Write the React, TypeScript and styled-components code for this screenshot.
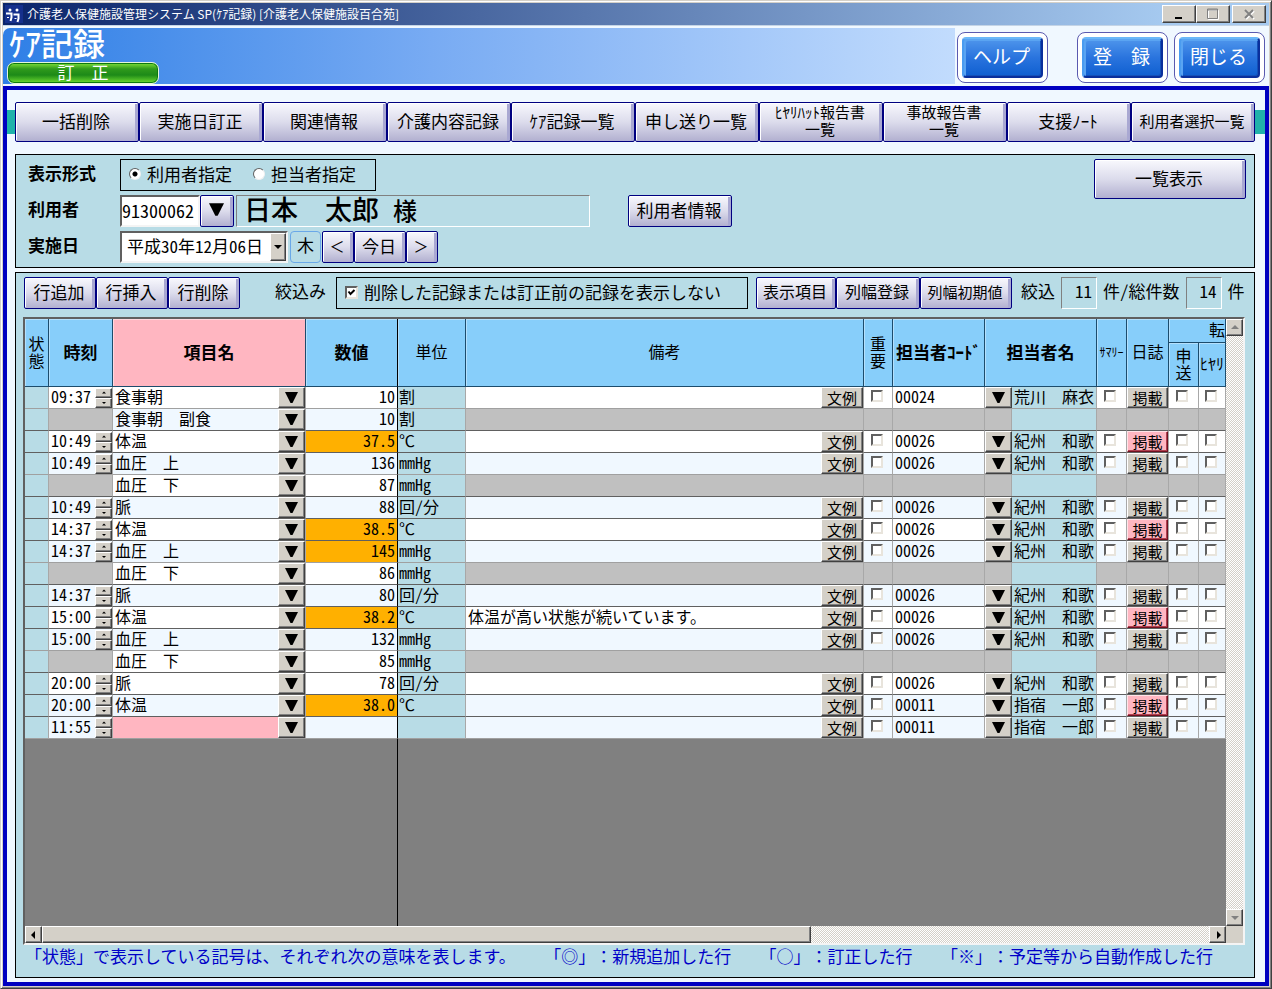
import React from "react";
import styled, { createGlobalStyle, css } from "styled-components";

const GlobalStyle = createGlobalStyle`
  *, *::before, *::after { box-sizing: border-box; }
  body {
    margin: 0;
    background: #d4d0c8;
    color: #000;
    font-family: "Noto Sans CJK JP", "Liberation Sans", sans-serif;
    font-size: 17px;
    line-height: 20px;
    white-space: nowrap;
    text-spacing-trim: space-all;
  }
  button, input, select {
    margin: 0;
    font: inherit;
    color: inherit;
    border-radius: 0;
  }
  input, select { min-width: 0; outline: none; }
  button { white-space: nowrap; cursor: pointer; }
`;

const halfWidth = css`
  font-feature-settings: "hwid";
`;

/* ---------- window frame ---------- */

const WindowFrame = styled.div`
  display: flex;
  flex-direction: column;
  min-height: 100vh;
  padding: 2px;
  border: 1px solid;
  border-color: #d4d0c8 #404040 #404040 #d4d0c8;
  background: #d4d0c8;
  box-shadow: inset 1px 1px #fff, inset -1px -1px #808080;
`;

const TitleBar = styled.div`
  display: flex;
  align-items: center;
  gap: 4px;
  height: 22px;
  padding: 0 3px 0 2px;
  background: linear-gradient(90deg, #0a246a, #a6caf0 92%);
  color: #fff;
  font-size: 12px;
`;

const TitleText = styled.span`
  flex: 1;
`;

const CaptionButtons = styled.div`
  display: flex;
`;

const raised = css`
  border: 1px solid;
  border-color: #fff #404040 #404040 #fff;
  background: #d4d0c8;
  box-shadow: inset -1px -1px #808080;
`;

const CaptionButton = styled.button<{ $apart?: boolean }>`
  ${raised}
  display: flex;
  align-items: center;
  justify-content: center;
  width: 34px;
  height: 18px;
  padding: 0;
  margin-left: ${(p) => (p.$apart ? 2 : 0)}px;
`;

/* ---------- header ---------- */

const Header = styled.header`
  display: flex;
  height: 61px;
  padding-top: 2px;
  border-top: 1px solid #c4d4e6;
  background: #f0f8ff;
`;

const Banner = styled.div`
  display: flex;
  flex-direction: column;
  align-items: flex-start;
  flex: 1;
  height: 56px;
  padding-left: 4px;
  border-top-left-radius: 7px;
  background: linear-gradient(90deg, #2f7fe6, #78abf3 45%, #c2dcfd);
`;

const ScreenTitle = styled.h1`
  margin: 0 0 5px;
  padding-left: 2px;
  color: #fff;
  font-size: 32px;
  font-weight: 500;
  line-height: 29px;
`;

const ModeBadge = styled.div`
  width: 152px;
  height: 22px;
  border: 1px solid #e6f6d8;
  border-radius: 7px;
  background: linear-gradient(#7fe03a, #2f9a1c 30%, #1d8a18 60%, #6fdc30);
  box-shadow: inset 0 0 0 1px #0c7a10;
  color: #fff;
  line-height: 17px;
  text-align: center;
`;

const HeaderActions = styled.div`
  display: flex;
  gap: 6px;
  padding: 4px 4px 0 2px;
`;

const GlossButton = styled.button<{ $spaced?: boolean }>`
  width: 91px;
  height: 51px;
  margin-right: ${(p) => (p.$spaced ? 23 : 0)}px;
  padding: 4px;
  border: 1px solid #5a5ab0;
  border-radius: 8px;
  background: #fff;
`;

const GlossFace = styled.span`
  display: block;
  height: 41px;
  padding-right: 2px;
  border: 2px solid;
  border-color: #6ab8f8 #0a2f9c #0a2f9c #4a9cf0;
  border-radius: 4px;
  background: linear-gradient(#4f96ec, #2a74de 50%, #0f5fd0);
  box-shadow: inset 2px 2px #5aa4f2, inset -1px -1px #1450b8;
  color: #fff;
  font-size: 19px;
  line-height: 33px;
`;

/* ---------- body ---------- */

const Workspace = styled.main`
  display: flex;
  flex-direction: column;
  flex: 1;
  padding: 12px 0 4px;
  border: 4px solid #0000c0;
  background: #f0f8ff;
`;

const FunctionBar = styled.nav`
  display: grid;
  grid-template-columns: repeat(10, 1fr);
  height: 40px;
  margin-bottom: 12px;
  padding: 0 10px 0 8px;
  background: linear-gradient(#20b2aa, #20b2aa) 0 8px / 100% 24px no-repeat;
`;

const PushButton = styled.button<{ $w?: number; $h?: number; $size?: number }>`
  display: flex;
  align-items: center;
  justify-content: center;
  flex: none;
  width: ${(p) => (p.$w ? `${p.$w}px` : "auto")};
  height: ${(p) => p.$h ?? 32}px;
  padding: 0 2px 4px 0;
  border: 1px solid #000080;
  border-radius: 2px;
  background: linear-gradient(#f8f8fd, #dcdcec 50%, #b2b0d0);
  box-shadow: inset 1px 1px #fff, inset -3px 0 #a9a8d2;
  font-size: ${(p) => p.$size ?? 17}px;
  line-height: 17px;
`;

const Panel = styled.section`
  margin: 0 10px 0 8px;
  border: 1px solid #000;
  background: #b8dce6;
`;

const ConditionPanel = styled(Panel)`
  display: flex;
  align-items: flex-start;
  justify-content: space-between;
  margin-bottom: 4px;
  padding: 4px 8px 4px 12px;
`;

const ConditionRows = styled.div`
  display: flex;
  flex-direction: column;
  gap: 4px;
`;

const Row = styled.div`
  display: flex;
  align-items: center;
  height: 32px;
`;

const RowLabel = styled.label`
  width: 92px;
  padding-bottom: 4px;
  font-weight: 700;
`;

const ChoiceBox = styled.div<{ $w: number }>`
  display: flex;
  align-items: center;
  gap: 21px;
  width: ${(p) => p.$w}px;
  height: 32px;
  padding: 0 8px 2px;
  border: 1px solid #000;
`;

const Choice = styled.label`
  display: flex;
  align-items: center;
  gap: 6px;
`;

const Radio = styled.input`
  appearance: none;
  width: 12px;
  height: 12px;
  border: 1px solid;
  border-color: #606060 #f0f0f0 #f0f0f0 #606060;
  border-radius: 6px;
  background: #fff;
  &:checked {
    background: radial-gradient(#000 2px, #fff 3px);
  }
`;

const Check = styled.input`
  appearance: none;
  flex: none;
  width: 13px;
  height: 13px;
  border: 2px solid;
  border-color: #606060 #e8e4dc #e8e4dc #606060;
  background: #fff;
`;

const CheckSlot = styled.span`
  display: grid;
  > * { grid-area: 1 / 1; }
  > svg { pointer-events: none; }
`;

const sunken = css`
  border: 2px solid;
  border-color: #606060 #f4f4f4 #f4f4f4 #606060;
  background: #fff;
`;

const CodeInput = styled.input`
  ${sunken}
  ${halfWidth}
  width: 80px;
  height: 32px;
  padding: 0 0 2px;
  font-size: 18px;
`;

const NameField = styled.output`
  display: flex;
  align-items: center;
  gap: 14px;
  width: 354px;
  height: 32px;
  margin: 0 38px 0 2px;
  padding: 0 0 4px 7px;
  border: 1px solid;
  border-color: #808080 #fff #fff #808080;
  font-size: 27px;
  font-weight: 500;
`;

const Honorific = styled.span`
  padding-top: 2px;
  font-size: 24px;
`;

const DateCombo = styled.div`
  ${sunken}
  display: flex;
  width: 168px;
  height: 32px;
`;

const DateSelect = styled.select`
  ${halfWidth}
  appearance: none;
  flex: 1;
  padding: 0 0 2px 5px;
  border: 0;
  background: #fff;
`;

const ComboArrow = styled.span`
  ${raised}
  display: flex;
  align-items: center;
  justify-content: center;
  width: 16px;
`;

const Weekday = styled.span`
  width: 31px;
  height: 32px;
  margin: 0 1px 0 2px;
  border: 1px solid #6aa8e8;
  border-radius: 4px;
  line-height: 26px;
  text-align: center;
`;

/* ---------- record panel ---------- */

const RecordPanel = styled(Panel)`
  display: flex;
  flex-direction: column;
  flex: 1;
  padding: 4px 9px 0 7px;
`;

const Tools = styled.div`
  display: flex;
  align-items: center;
  margin: 0 0 8px 1px;
`;

const ToolText = styled.span`
  padding-bottom: 4px;
`;

const ButtonGroup = styled.div`
  display: flex;
`;

const FilterGroup = styled.div`
  display: flex;
  align-items: center;
  gap: 10px;
  margin: 0 8px 0 35px;
`;

const Counts = styled.div`
  ${halfWidth}
  display: flex;
  align-items: center;
  gap: 6px;
  margin-left: 9px;
`;

const CountField = styled.output`
  width: 36px;
  height: 32px;
  padding-right: 4px;
  border: 1px solid;
  border-color: #808080 #fff #fff #808080;
  line-height: 26px;
  text-align: right;
`;

const GridFrame = styled.div`
  display: grid;
  grid-template-columns: minmax(0, 1fr) 17px;
  grid-template-rows: 1fr 17px;
  flex: 1;
  border: 2px solid;
  border-color: #606060 #f4f4f4 #f4f4f4 #606060;
  background: #d4d0c8;
`;

const GridView = styled.div`
  display: flex;
  flex-direction: column;
  overflow: hidden;
  background: #808080;
`;

const FrozenEdge = styled.div`
  flex: 1;
  width: 373px;
  border-right: 1px solid #000;
`;

const Table = styled.table`
  width: 100%;
  table-layout: fixed;
  border-collapse: separate;
  border-spacing: 0;
  font-size: 16px;
  line-height: 17px;
`;

const Head = styled.th<{ $pink?: boolean; $bold?: boolean; $frozen?: boolean; $small?: boolean; $end?: boolean }>`
  height: ${(p) => (p.$end ? 24 : 44)}px;
  padding: 0 0 2px;
  border-right: 1px solid ${(p) => (p.$frozen ? "#000" : "#1c4c6c")};
  border-bottom: 1px solid #1c4c6c;
  background: ${(p) => (p.$pink ? "#ffb6c1" : "#87cefa")};
  box-shadow: inset 1px 1px ${(p) => (p.$pink ? "#ffd8de" : "#b4e0fc")};
  font-size: ${(p) => (p.$small ? 12 : p.$bold ? 17 : 16)}px;
  font-weight: ${(p) => (p.$bold ? 700 : 400)};
  text-align: ${(p) => (p.$end ? "right" : "center")};
`;

type Tone = "plain" | "info" | "off" | "alert" | "need";
const tones: Record<Tone, string> = {
  plain: "transparent",
  info: "#b8dce6",
  off: "#c0c0c0",
  alert: "#ffb000",
  need: "#ffb6c1",
};

const RecordLine = styled.tr<{ $tint: boolean; $joined: boolean }>`
  background: ${(p) => (p.$tint ? "#f0f8ff" : "#fff")};
  > td {
    border-bottom: 1px solid ${(p) => (p.$joined ? "#a0a0a0" : "#606060")};
  }
`;

const Cell = styled.td<{ $tone?: Tone; $frozen?: boolean }>`
  height: 22px;
  padding: 0;
  border-right: 1px solid ${(p) => (p.$frozen ? "#000" : "#a8a8a8")};
  background: ${(p) => tones[p.$tone ?? "plain"]};
`;

const CellRow = styled.div`
  display: flex;
  align-items: center;
  height: 21px;
`;

const CellInput = styled.input<{ $right?: boolean; $tone?: Tone; $text?: boolean }>`
  flex: 1;
  width: 100%;
  height: 21px;
  padding: 0 2px 4px;
  border: 0;
  background: ${(p) => tones[p.$tone ?? "plain"]};
  font-feature-settings: ${(p) => (p.$text ? "normal" : '"hwid"')};
  text-align: ${(p) => (p.$right ? "right" : "left")};
`;

const UnitText = styled.span`
  ${halfWidth}
  display: block;
  padding: 0 0 3px 1px;
`;

const PersonName = styled.span`
  flex: 1;
  height: 21px;
  padding-left: 2px;
  background: #b8dce6;
  line-height: 18px;
`;

const CellButton = styled.button<{ $w: number; $pink?: boolean }>`
  ${raised}
  display: flex;
  align-items: center;
  justify-content: center;
  flex: none;
  width: ${(p) => p.$w}px;
  height: 21px;
  padding: 0;
  font-size: 15px;
  line-height: 15px;
  ${(p) =>
    p.$pink &&
    css`
      background: #ffb6c1;
      border-color: #ffe4e8 #701020 #701020 #ffe4e8;
      box-shadow: inset -1px -1px #b04050;
    `}
`;

const BlankSlot = styled.span<{ $w: number }>`
  flex: none;
  width: ${(p) => p.$w}px;
  height: 21px;
  border-right: 1px solid #a8a8a8;
`;

const Spinner = styled.div`
  display: flex;
  flex-direction: column;
  width: 17px;
`;

const SpinButton = styled.button`
  ${raised}
  display: flex;
  align-items: center;
  justify-content: center;
  height: 10px;
  padding: 0;
`;

const CheckCell = styled.div`
  display: flex;
  justify-content: center;
  height: 21px;
  padding: 3px 2px 0 0;
  > input { width: 12px; height: 12px; }
`;

const track = css`
  background: repeating-conic-gradient(#fff 0 25%, #d4d0c8 0 50%) 0 0 / 2px 2px;
`;

const VerticalBar = styled.div`
  ${track}
  display: flex;
  flex-direction: column;
  justify-content: space-between;
`;

const HorizontalBar = styled.div`
  ${track}
  display: flex;
  justify-content: space-between;
`;

const Thumb = styled.div`
  ${raised}
  flex: 0 0 64%;
  margin-right: auto;
`;

const ArrowButton = styled.button`
  ${raised}
  display: flex;
  align-items: center;
  justify-content: center;
  width: 17px;
  height: 17px;
  padding: 0;
`;

const Legend = styled.footer`
  display: flex;
  justify-content: space-between;
  height: 32px;
  padding: 1px 32px 0 2px;
  color: #0000c8;
`;

/* ---------- icons ---------- */

const Triangle = ({ w = 13, h = 11 }: { w?: number; h?: number }) => (
  <svg width={w} height={h} viewBox="0 0 13 11" aria-hidden="true">
    <path d="M0 0H13L7.5 11H5.5Z" fill="#000" />
  </svg>
);

const arrowPaths = {
  up: "M0 5L4 1L8 5Z",
  down: "M0 2L4 6L8 2Z",
  left: "M5 0L1 4L5 8Z",
  right: "M3 0L7 4L3 8Z",
};

const Arrow = ({ dir, size = 8, color = "#000" }: { dir: keyof typeof arrowPaths; size?: number; color?: string }) => (
  <svg width={size} height={size} viewBox="0 0 8 8" aria-hidden="true">
    <path d={arrowPaths[dir]} fill={color} />
  </svg>
);

const AppLogo = () => (
  <svg width="18" height="20" viewBox="0 0 18 20" aria-hidden="true">
    <rect y="1" width="18" height="18" fill="#15308c" />
    <circle cx="5" cy="6" r="1.5" fill="#fff" />
    <circle cx="12" cy="6" r="1.5" fill="#fff" />
    <path d="M1 9.500H6.500V13.500L5.500 17M8.500 10.500H13.500V14.500L12.500 18M3 13V14M10.500 14V15" stroke="#fff" strokeWidth="2" fill="none" />
  </svg>
);

/* ---------- data ---------- */

type Entry = {
  time?: string;
  item: string;
  value: string;
  unit: string;
  high?: boolean;
  note?: string;
  code?: string;
  person?: string;
  posted?: boolean;
  tint: boolean;
};

const wakayama = { code: "00026", person: "紀州　和歌" };
const ibusuki = { code: "00011", person: "指宿　一郎" };

const entries: Entry[] = [
  { time: "09:37", item: "食事朝", value: "10", unit: "割", code: "00024", person: "荒川　麻衣", tint: false },
  { item: "食事朝　副食", value: "10", unit: "割", tint: true },
  { time: "10:49", item: "体温", value: "37.5", unit: "℃", high: true, ...wakayama, posted: true, tint: false },
  { time: "10:49", item: "血圧　上", value: "136", unit: "mmHg", ...wakayama, tint: true },
  { item: "血圧　下", value: "87", unit: "mmHg", tint: false },
  { time: "10:49", item: "脈", value: "88", unit: "回/分", ...wakayama, tint: true },
  { time: "14:37", item: "体温", value: "38.5", unit: "℃", high: true, ...wakayama, posted: true, tint: false },
  { time: "14:37", item: "血圧　上", value: "145", unit: "mmHg", high: true, ...wakayama, tint: true },
  { item: "血圧　下", value: "86", unit: "mmHg", tint: false },
  { time: "14:37", item: "脈", value: "80", unit: "回/分", ...wakayama, tint: true },
  { time: "15:00", item: "体温", value: "38.2", unit: "℃", high: true, note: "体温が高い状態が続いています。", ...wakayama, posted: true, tint: false },
  { time: "15:00", item: "血圧　上", value: "132", unit: "mmHg", ...wakayama, tint: true },
  { item: "血圧　下", value: "85", unit: "mmHg", tint: false },
  { time: "20:00", item: "脈", value: "78", unit: "回/分", ...wakayama, tint: false },
  { time: "20:00", item: "体温", value: "38.0", unit: "℃", high: true, ...ibusuki, posted: true, tint: true },
  { time: "11:55", item: "", value: "", unit: "", ...ibusuki, tint: true },
];

const functions: { label: React.ReactNode; size?: number }[] = [
  { label: "一括削除" },
  { label: "実施日訂正" },
  { label: "関連情報" },
  { label: "介護内容記録" },
  { label: "ｹｱ記録一覧" },
  { label: "申し送り一覧" },
  { label: <>ﾋﾔﾘﾊｯﾄ報告書<br />一覧</>, size: 15 },
  { label: <>事故報告書<br />一覧</>, size: 15 },
  { label: "支援ﾉｰﾄ" },
  { label: "利用者選択一覧", size: 15 },
];

const columnWidths = [24, 64, 193, 92, 68, 0, 29, 92, 112, 30, 42, 30, 27];

/* ---------- rows ---------- */

function RecordRow({ entry, joined }: { entry: Entry; joined: boolean }) {
  const main = entry.time !== undefined;
  const rest: Tone = main ? "plain" : "off";
  return (
    <RecordLine $tint={entry.tint} $joined={joined}>
      <Cell $tone="info" />
      <Cell $tone={rest}>
        {main && (
          <CellRow>
            <CellInput aria-label="時刻" defaultValue={entry.time} />
            <Spinner>
              <SpinButton aria-label="時刻を進める"><Arrow dir="up" size={4} /></SpinButton>
              <SpinButton aria-label="時刻を戻す"><Arrow dir="down" size={4} /></SpinButton>
            </Spinner>
          </CellRow>
        )}
      </Cell>
      <Cell>
        <CellRow>
          <CellInput aria-label="項目名" $text defaultValue={entry.item} $tone={entry.item ? "plain" : "need"} />
          <CellButton $w={27} aria-label="項目を選択"><Triangle /></CellButton>
        </CellRow>
      </Cell>
      <Cell $frozen $tone={entry.high ? "alert" : "plain"}>
        <CellRow><CellInput aria-label="数値" $right defaultValue={entry.value} /></CellRow>
      </Cell>
      <Cell $tone="info"><UnitText>{entry.unit}</UnitText></Cell>
      <Cell $tone={rest}>
        {main && (
          <CellRow>
            <CellInput aria-label="備考" $text defaultValue={entry.note} />
            <CellButton $w={42}>文例</CellButton>
          </CellRow>
        )}
      </Cell>
      <Cell $tone={rest}>{main && <CheckCell><Check type="checkbox" aria-label="重要" /></CheckCell>}</Cell>
      <Cell $tone={rest}>
        {main && <CellRow><CellInput aria-label="担当者コード" defaultValue={entry.code} /></CellRow>}
      </Cell>
      <Cell $tone={rest}>
        <CellRow>
          {main ? <CellButton $w={27} aria-label="担当者を選択"><Triangle /></CellButton> : <BlankSlot $w={27} />}
          <PersonName>{entry.person}</PersonName>
        </CellRow>
      </Cell>
      <Cell $tone={rest}>{main && <CheckCell><Check type="checkbox" aria-label="サマリー" /></CheckCell>}</Cell>
      <Cell $tone={rest}>{main && <CellButton $w={41} $pink={entry.posted}>掲載</CellButton>}</Cell>
      <Cell $tone={rest}>{main && <CheckCell><Check type="checkbox" aria-label="申送" /></CheckCell>}</Cell>
      <Cell $tone={rest}>{main && <CheckCell><Check type="checkbox" aria-label="ヒヤリ" /></CheckCell>}</Cell>
    </RecordLine>
  );
}

export default function App() {
  return (
    <>
      <GlobalStyle />
      <WindowFrame>
        <TitleBar>
          <AppLogo />
          <TitleText>介護老人保健施設管理システム SP(ｹｱ記録) [介護老人保健施設百合苑]</TitleText>
          <CaptionButtons>
            <CaptionButton aria-label="最小化">
              <svg width="12" height="12" viewBox="0 0 12 12"><path d="M2 9H9V11H2Z" /></svg>
            </CaptionButton>
            <CaptionButton aria-label="最大化">
              <svg width="12" height="12" viewBox="0 0 12 12">
                <path d="M1.500 2.500H11.500V11.500H1.500Z" stroke="#fff" fill="none" />
                <path d="M.5 1H10.500V10.500H.5ZM.5 2H10.500" stroke="#808080" fill="none" />
              </svg>
            </CaptionButton>
            <CaptionButton $apart aria-label="閉じる">
              <svg width="12" height="12" viewBox="0 0 12 12">
                <path d="M3 3L11 11M11 3L3 11" stroke="#fff" strokeWidth="2" />
                <path d="M2 2L10 10M10 2L2 10" stroke="#808080" strokeWidth="2" />
              </svg>
            </CaptionButton>
          </CaptionButtons>
        </TitleBar>

        <Header>
          <Banner>
            <ScreenTitle>ｹｱ記録</ScreenTitle>
            <ModeBadge>訂　正</ModeBadge>
          </Banner>
          <HeaderActions>
            <GlossButton $spaced><GlossFace>ヘルプ</GlossFace></GlossButton>
            <GlossButton><GlossFace>登　録</GlossFace></GlossButton>
            <GlossButton><GlossFace>閉じる</GlossFace></GlossButton>
          </HeaderActions>
        </Header>

        <Workspace>
          <FunctionBar>
            {functions.map((f, i) => (
              <PushButton key={i} $h={40} $size={f.size}>
                <span>{f.label}</span>
              </PushButton>
            ))}
          </FunctionBar>

          <ConditionPanel>
            <ConditionRows>
              <Row>
                <RowLabel as="span" id="mode-label">表示形式</RowLabel>
                <ChoiceBox $w={256} role="radiogroup" aria-labelledby="mode-label">
                  <Choice><Radio type="radio" name="mode" defaultChecked />利用者指定</Choice>
                  <Choice><Radio type="radio" name="mode" />担当者指定</Choice>
                </ChoiceBox>
              </Row>
              <Row>
                <RowLabel htmlFor="user-code">利用者</RowLabel>
                <CodeInput id="user-code" defaultValue="91300062" />
                <PushButton $w={34} aria-label="利用者を選択"><Triangle w={15} h={13} /></PushButton>
                <NameField>
                  日本　太郎
                  <Honorific>様</Honorific>
                </NameField>
                <PushButton $w={104}>利用者情報</PushButton>
              </Row>
              <Row>
                <RowLabel htmlFor="date">実施日</RowLabel>
                <DateCombo>
                  <DateSelect id="date"><option>平成30年12月06日</option></DateSelect>
                  <ComboArrow><Arrow dir="down" /></ComboArrow>
                </DateCombo>
                <Weekday>木</Weekday>
                <PushButton $w={32} $size={15} aria-label="前日">＜</PushButton>
                <PushButton $w={52}>今日</PushButton>
                <PushButton $w={32} $size={15} aria-label="翌日">＞</PushButton>
              </Row>
            </ConditionRows>
            <PushButton $w={152} $h={40}>一覧表示</PushButton>
          </ConditionPanel>

          <RecordPanel>
            <Tools>
              <ButtonGroup>
                <PushButton $w={72}>行追加</PushButton>
                <PushButton $w={72}>行挿入</PushButton>
                <PushButton $w={72}>行削除</PushButton>
              </ButtonGroup>
              <FilterGroup>
                <ToolText>絞込み</ToolText>
                <ChoiceBox $w={412}>
                  <Choice>
                    <CheckSlot>
                      <Check type="checkbox" defaultChecked />
                      <svg width="13" height="13" viewBox="0 0 13 13" aria-hidden="true">
                        <path d="M3.500 5.500L5.500 8L9.500 4" stroke="#000" strokeWidth="2" fill="none" />
                      </svg>
                    </CheckSlot>
                    削除した記録または訂正前の記録を表示しない
                  </Choice>
                </ChoiceBox>
              </FilterGroup>
              <ButtonGroup>
                <PushButton $w={80} $size={16}>表示項目</PushButton>
                <PushButton $w={84} $size={16}>列幅登録</PushButton>
                <PushButton $w={92} $size={15}>列幅初期値</PushButton>
              </ButtonGroup>
              <Counts>
                <ToolText>絞込</ToolText>
                <CountField>11</CountField>
                <ToolText>件/総件数</ToolText>
                <CountField>14</CountField>
                <ToolText>件</ToolText>
              </Counts>
            </Tools>

            <GridFrame>
              <GridView>
                <Table>
                  <colgroup>
                    {columnWidths.map((w, i) => (
                      <col key={i} style={w ? { width: w } : undefined} />
                    ))}
                  </colgroup>
                  <thead>
                    <tr>
                      <Head rowSpan={2}>状<br />態</Head>
                      <Head rowSpan={2} $bold>時刻</Head>
                      <Head rowSpan={2} $bold $pink>項目名</Head>
                      <Head rowSpan={2} $bold $frozen>数値</Head>
                      <Head rowSpan={2}>単位</Head>
                      <Head rowSpan={2}>備考</Head>
                      <Head rowSpan={2}>重<br />要</Head>
                      <Head rowSpan={2} $bold>担当者ｺｰﾄﾞ</Head>
                      <Head rowSpan={2} $bold>担当者名</Head>
                      <Head rowSpan={2} $small>ｻﾏﾘｰ</Head>
                      <Head rowSpan={2}>日誌</Head>
                      <Head colSpan={2} $end>転</Head>
                    </tr>
                    <tr>
                      <Head>申<br />送</Head>
                      <Head>ﾋﾔﾘ</Head>
                    </tr>
                  </thead>
                  <tbody>
                    {entries.map((entry, i) => (
                      <RecordRow
                        key={i}
                        entry={entry}
                        joined={i + 1 === entries.length || entries[i + 1].time === undefined}
                      />
                    ))}
                  </tbody>
                </Table>
                <FrozenEdge />
              </GridView>
              <VerticalBar>
                <ArrowButton aria-label="上へ"><Arrow dir="up" color="#808080" /></ArrowButton>
                <ArrowButton aria-label="下へ"><Arrow dir="down" color="#808080" /></ArrowButton>
              </VerticalBar>
              <HorizontalBar>
                <ArrowButton aria-label="左へ"><Arrow dir="left" /></ArrowButton>
                <Thumb />
                <ArrowButton aria-label="右へ"><Arrow dir="right" /></ArrowButton>
              </HorizontalBar>
            </GridFrame>

            <Legend>
              <span>「状態」で表示している記号は、それぞれ次の意味を表します。</span>
              <span>「◎」：新規追加した行</span>
              <span>「○」：訂正した行</span>
              <span>「※」：予定等から自動作成した行</span>
            </Legend>
          </RecordPanel>
        </Workspace>
      </WindowFrame>
    </>
  );
}
